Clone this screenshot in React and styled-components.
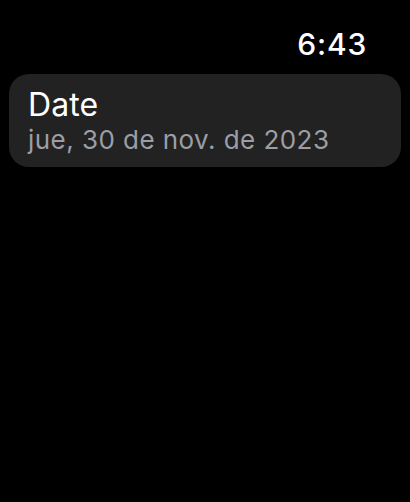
import React from "react";
import styled, { createGlobalStyle } from "styled-components";

const GlobalStyle = createGlobalStyle`
  html, body {
    margin: 0;
    padding: 0;
    background: #000;
  }
  body {
    font-family: Inter, "Noto Sans", sans-serif;
    -webkit-font-smoothing: antialiased;
  }
`;

const Screen = styled.div`
  width: 410px;
  height: 502px;
  background: #000;
  display: flex;
  flex-direction: column;
  padding: 26px 9px 0 9px;
  box-sizing: border-box;
`;

const StatusBar = styled.div`
  display: flex;
  justify-content: flex-end;
  padding-right: 34px;
  height: 42px;
`;

const Clock = styled.span`
  color: #fff;
  font-size: 30px;
  font-weight: 500;
  line-height: 36px;
  letter-spacing: 0.8px;
`;

const Card = styled.div`
  margin-top: 6px;
  background: #222222;
  border-radius: 20px;
  padding: 12px 20px 11px 19px;
  display: flex;
  flex-direction: column;
`;

const Title = styled.div`
  color: #fff;
  font-size: 32px;
  font-weight: 400;
  line-height: 38px;
  letter-spacing: 0.1px;
`;

const Subtitle = styled.div`
  color: #9c9ea6;
  font-size: 26px;
  font-weight: 400;
  line-height: 32px;
  letter-spacing: 0.45px;
`;

export default function App() {
  return (
    <>
      <GlobalStyle />
      <Screen>
        <StatusBar>
          <Clock>6:43</Clock>
        </StatusBar>
        <Card>
          <Title>Date</Title>
          <Subtitle>jue, 30 de nov. de 2023</Subtitle>
        </Card>
      </Screen>
    </>
  );
}
